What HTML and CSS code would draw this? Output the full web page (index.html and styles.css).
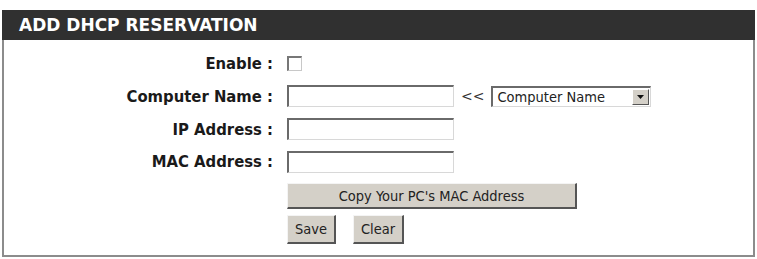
FILE: index.html
```html
<!DOCTYPE html>
<html lang="en">
<head>
    <meta charset="UTF-8">
    <meta name="viewport" content="width=device-width, initial-scale=1.0">
    <title>Add DHCP Reservation</title>
    <link rel="stylesheet" href="styles.css">
</head>
<body>
    <div class="box">
        <h2 class="box-title">ADD DHCP RESERVATION</h2>
        <div class="form">
            <div class="row row-enable">
                <label class="label" for="enable">Enable :</label>
                <div class="field"><input type="checkbox" id="enable" class="check"></div>
            </div>
            <div class="row row-name">
                <label class="label" for="compName">Computer Name :</label>
                <div class="field">
                    <input type="text" id="compName" class="text">
                    <span class="arrows">&lt;&lt;</span>
                    <div class="select">
                        <span class="select-value">Computer Name</span>
                        <span class="select-btn">
                            <svg width="7" height="4" viewBox="0 0 7 4"><path d="M0 0H7L3.5 4Z" fill="#111"/></svg>
                        </span>
                    </div>
                </div>
            </div>
            <div class="row row-ip">
                <label class="label" for="ipAddr">IP Address :</label>
                <div class="field"><input type="text" id="ipAddr" class="text"></div>
            </div>
            <div class="row row-mac">
                <label class="label" for="macAddr">MAC Address :</label>
                <div class="field"><input type="text" id="macAddr" class="text"></div>
            </div>
            <div class="row row-copy">
                <div class="label"></div>
                <div class="field"><button class="btn btn-copy">Copy Your PC's MAC Address</button></div>
            </div>
            <div class="row row-save">
                <div class="label"></div>
                <div class="field">
                    <button class="btn btn-save">Save</button>
                    <button class="btn btn-clear">Clear</button>
                </div>
            </div>
        </div>
    </div>
</body>
</html>
```

FILE: styles.css
```css
body {
    margin: 0;
    background-color: #fff;
    font-family: "DejaVu Sans Condensed", "DejaVu Sans", sans-serif;
    color: #222;
}

.box {
    margin: 10px 2px 0 2px;
    height: 247px;
    border: 2px solid #8c8c8c;
    border-top: none;
    box-sizing: border-box;
}

.box-title {
    margin: 0 -2px;
    height: 30px;
    padding-left: 17px;
    background-color: #303030;
    color: #fff;
    font-family: "DejaVu Sans", sans-serif;
    font-size: 17px;
    font-weight: bold;
    line-height: 31px;
}

.form {
    padding-top: 7px;
}

.row {
    display: flex;
    align-items: center;
}

.row-enable { height: 32px; }
.row-name { height: 34px; }
.row-ip { height: 32px; }
.row-mac { height: 33px; }
.row-copy { height: 36px; }
.row-save { height: 30px; }

.label {
    width: 269px;
    flex: none;
    text-align: right;
    font-size: 16.5px;
    font-weight: bold;
    color: #1a1a1a;
}

.field {
    display: flex;
    align-items: center;
    margin-left: 14px;
}

.check {
    appearance: none;
    margin: 0;
    width: 15px;
    height: 15px;
    background: #fff;
    border: 1px solid #c8c8c8;
    border-top: 2px solid #777;
    border-left: 2px solid #777;
    box-sizing: border-box;
}

.text {
    width: 167px;
    height: 22px;
    margin: 0;
    padding: 0 3px;
    box-sizing: border-box;
    background: #fff;
    border: 1px solid #d8d8d8;
    border-top: 2px solid #6a6a6a;
    border-left: 2px solid #6a6a6a;
    font-family: inherit;
    font-size: 14px;
}

.arrows {
    margin: 0 7px 0 7px;
    font-family: "DejaVu Sans", sans-serif;
    font-size: 14px;
    color: #333;
}

.select {
    display: flex;
    align-items: center;
    justify-content: space-between;
    width: 160px;
    height: 21px;
    box-sizing: border-box;
    background: #fff;
    border: 1px solid #d8d8d8;
    border-top: 2px solid #6a6a6a;
    border-left: 2px solid #6a6a6a;
}

.select-value {
    padding-left: 4px;
    font-size: 14.5px;
    color: #222;
}

.select-btn {
    display: flex;
    align-items: center;
    justify-content: center;
    width: 17px;
    height: 16px;
    margin-right: 1px;
    background: #d4d0c8;
    border: 1px solid #fff;
    border-right-color: #555;
    border-bottom-color: #555;
    box-sizing: border-box;
}

.btn {
    margin: 0;
    padding: 0;
    background: #d4d0c8;
    border: 1px solid #f4f4f4;
    border-right: 2px solid #555;
    border-bottom: 2px solid #555;
    box-sizing: border-box;
    font-family: inherit;
    font-size: 14.5px;
    color: #222;
    cursor: pointer;
}

.btn-copy {
    width: 290px;
    height: 26px;
}

.btn-save {
    width: 49px;
    height: 29px;
}

.btn-clear {
    width: 51px;
    height: 29px;
    margin-left: 17px;
}
```
